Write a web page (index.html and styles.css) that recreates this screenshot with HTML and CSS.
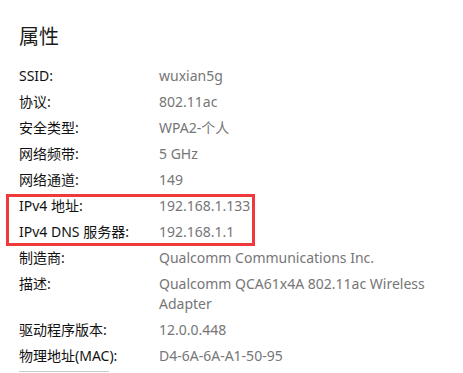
FILE: index.html
```html
<!DOCTYPE html>
<html lang="zh-CN">
<head>
<meta charset="utf-8">
<title>属性</title>
<link rel="stylesheet" href="styles.css">
</head>
<body>
<main class="panel">
  <h1 class="title">属性</h1>
  <dl class="props">
    <div class="row"><dt>SSID:</dt><dd>wuxian5g</dd></div>
    <div class="row"><dt>协议:</dt><dd>802.11ac</dd></div>
    <div class="row"><dt>安全类型:</dt><dd>WPA2-个人</dd></div>
    <div class="row"><dt>网络频带:</dt><dd>5 GHz</dd></div>
    <div class="row"><dt>网络通道:</dt><dd>149</dd></div>
    <div class="group">
      <div class="row"><dt>IPv4 地址:</dt><dd>192.168.1.133</dd></div>
      <div class="row"><dt>IPv4 DNS 服务器:</dt><dd>192.168.1.1</dd></div>
      <div class="highlight"></div>
    </div>
    <div class="row"><dt>制造商:</dt><dd>Qualcomm Communications Inc.</dd></div>
    <div class="row"><dt>描述:</dt><dd>Qualcomm QCA61x4A 802.11ac Wireless Adapter</dd></div>
    <div class="row"><dt>驱动程序版本:</dt><dd>12.0.0.448</dd></div>
    <div class="row"><dt>物理地址(MAC):</dt><dd>D4-6A-6A-A1-50-95</dd></div>
  </dl>
  <div class="button-edge"></div>
</main>
</body>
</html>
```
FILE: styles.css
```css
html, body {
  margin: 0;
  padding: 0;
  background: #ffffff;
}
body {
  font-family: "Noto Sans", "Noto Sans CJK SC", sans-serif;
  color: #1a1a1a;
  overflow: hidden;
}
.panel {
  padding: 22px 0 0 19px;
  width: 463px;
  box-sizing: border-box;
}
.title {
  margin: 0 0 16px 0;
  font-size: 20px;
  line-height: 28px;
  font-weight: 400;
  font-family: "Noto Sans CJK SC", sans-serif;
}
.props {
  margin: 0;
  display: flex;
  flex-direction: column;
  gap: 6px;
}
.group {
  position: relative;
  display: flex;
  flex-direction: column;
  gap: 6px;
}
.row {
  display: flex;
  font-size: 14px;
  line-height: 20px;
}
.row dt {
  width: 140px;
  flex: none;
  color: #111111;
}
.row dd {
  margin: 0;
  width: 284px;
  color: #767676;
}
.highlight {
  position: absolute;
  left: -13px;
  top: -2px;
  width: 249px;
  height: 52px;
  border: 3px solid #f0393c;
  box-sizing: border-box;
}
.button-edge {
  margin-top: 5px;
  width: 90px;
  height: 1px;
  background: #cccccc;
}
```
